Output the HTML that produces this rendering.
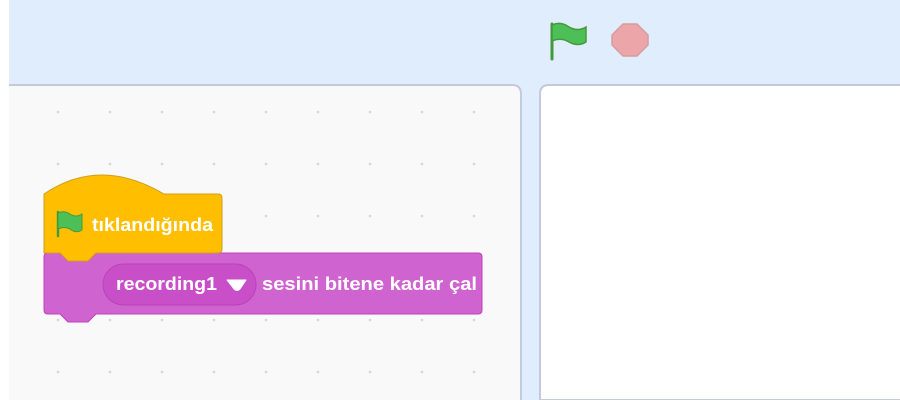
<!DOCTYPE html>
<html><head><meta charset="utf-8"><style>
html,body{margin:0;padding:0;width:900px;height:400px;overflow:hidden;background:#fff}
text{font-family:"Liberation Sans",Arial,sans-serif;font-weight:bold;fill:#fff}
</style></head><body>
<svg width="900" height="400" viewBox="0 0 900 400" xmlns="http://www.w3.org/2000/svg">
<rect x="9" y="0" width="891" height="400" fill="#e0edfc"/>
<!-- left panel -->
<path d="M9 85 H512 Q521 85 521 94 V400 H9 Z" fill="#f9f9f9"/>
<path d="M9 85 H512 Q521 85 521 94 V400" fill="none" stroke="#c3cad8" stroke-width="2"/>
<!-- right panel -->
<path d="M540 400 V94 Q540 85 549 85 H901 V400 Z" fill="#fff" stroke="#c3cad8" stroke-width="2"/>
<!-- dots -->
<g fill="#d6d6d6">
<circle cx="58" cy="112" r="1.3"/><circle cx="110" cy="112" r="1.3"/><circle cx="162" cy="112" r="1.3"/><circle cx="214" cy="112" r="1.3"/><circle cx="266" cy="112" r="1.3"/><circle cx="318" cy="112" r="1.3"/><circle cx="370" cy="112" r="1.3"/><circle cx="422" cy="112" r="1.3"/><circle cx="474" cy="112" r="1.3"/>
<circle cx="58" cy="164" r="1.3"/><circle cx="110" cy="164" r="1.3"/><circle cx="162" cy="164" r="1.3"/><circle cx="214" cy="164" r="1.3"/><circle cx="266" cy="164" r="1.3"/><circle cx="318" cy="164" r="1.3"/><circle cx="370" cy="164" r="1.3"/><circle cx="422" cy="164" r="1.3"/><circle cx="474" cy="164" r="1.3"/>
<circle cx="266" cy="216" r="1.3"/><circle cx="318" cy="216" r="1.3"/><circle cx="370" cy="216" r="1.3"/><circle cx="422" cy="216" r="1.3"/><circle cx="474" cy="216" r="1.3"/>
<circle cx="58" cy="320" r="1.3"/><circle cx="110" cy="320" r="1.3"/><circle cx="162" cy="320" r="1.3"/><circle cx="214" cy="320" r="1.3"/><circle cx="266" cy="320" r="1.3"/><circle cx="318" cy="320" r="1.3"/><circle cx="370" cy="320" r="1.3"/><circle cx="422" cy="320" r="1.3"/><circle cx="474" cy="320" r="1.3"/>
<circle cx="58" cy="372" r="1.3"/><circle cx="110" cy="372" r="1.3"/><circle cx="162" cy="372" r="1.3"/><circle cx="214" cy="372" r="1.3"/><circle cx="266" cy="372" r="1.3"/><circle cx="318" cy="372" r="1.3"/><circle cx="370" cy="372" r="1.3"/><circle cx="422" cy="372" r="1.3"/><circle cx="474" cy="372" r="1.3"/>
</g>
<!-- sound block -->
<path d="M48 253 H60 L68 261 H88 L96 253 H478 Q482 253 482 257 V310 Q482 314 478 314 H96 L88 322 H68 L60 314 H48 Q44 314 44 310 V257 Q44 253 48 253 Z" fill="#cf63cf" stroke="#bd42bd" stroke-width="1"/>
<!-- hat block with tab -->
<path d="M44 194 Q100 156 164 194 H218 Q222 194 222 198 V249 Q222 253 218 253 H96 L88 261 H68 L60 253 H44 Z" fill="#ffbf00" stroke="#cf9e1f" stroke-width="1"/>
<!-- flag in hat -->
<path d="M58 212 V236" stroke="#45993d" stroke-width="2.5" stroke-linecap="round"/>
<path d="M58 213 Q64 210 70 214 Q76 218 82 214 V230 Q76 234 70 229 Q64 226 58 229 Z" fill="#4cbf56" stroke="#45993d" stroke-width="1"/>
<text x="92" y="231" font-size="18" textLength="121" lengthAdjust="spacingAndGlyphs">tıklandığında</text>
<rect x="103" y="264" width="153" height="41" rx="20.5" fill="#c94fc9" stroke="#b842b8" stroke-width="1"/>
<text x="116" y="290" font-size="18" textLength="101" lengthAdjust="spacingAndGlyphs">recording1</text>
<path d="M227 280 H246 L240 289 Q237 292 234 289 Z" fill="#fff" stroke="#fff" stroke-width="1" stroke-linejoin="round"/>
<text x="262" y="290" font-size="18" textLength="215" lengthAdjust="spacingAndGlyphs">sesini bitene kadar çal</text>
<!-- top flag -->
<path d="M552 24 V59" stroke="#45993d" stroke-width="3" stroke-linecap="round"/>
<path d="M552 25 Q561 21 569 27 Q578 32 586 27 V42 Q578 47 569 42 Q561 37 552 41 Z" fill="#4cbf56" stroke="#45993d" stroke-width="1.5"/>
<!-- stop -->
<polygon points="623,24 637,24 648,35 648,45 637,56 623,56 612,45 612,35" fill="#eca5a9" stroke="#d69ba1" stroke-width="1.5"/>
</svg>
</body></html>
